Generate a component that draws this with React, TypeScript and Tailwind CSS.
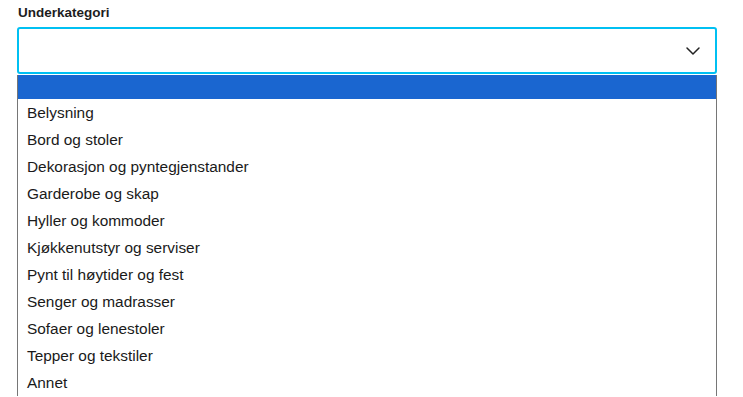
import { ChevronDown } from "lucide-react"

const options = [
	"",
	"Belysning",
	"Bord og stoler",
	"Dekorasjon og pyntegjenstander",
	"Garderobe og skap",
	"Hyller og kommoder",
	"Kjøkkenutstyr og serviser",
	"Pynt til høytider og fest",
	"Senger og madrasser",
	"Sofaer og lenestoler",
	"Tepper og tekstiler",
	"Annet",
]

export default function App() {
	return (
		<div className="w-[743px] h-[397px] overflow-hidden bg-white px-[17px] pt-[3px] font-['Liberation_Sans',sans-serif]">
			<label className="block pl-px text-[13.5px] leading-[20px] font-bold text-[#1d1d1d]">
				Underkategori
			</label>
			<div className="mt-[4px] w-[700px]">
				<div className="h-[47px] flex items-center justify-end pr-[10px] border-2 border-[#00c0f2] rounded-[3px]">
					<ChevronDown className="w-6 h-6 text-[#222]" strokeWidth={1.5} />
				</div>
				<ul className="mt-px border-x border-[#767676] text-[15.4px] text-[#1a1a1a]">
					{options.map((o, i) =>
						i === 0 ? (
							<li key={i} className="h-[24px] bg-[#1a66d0]" />
						) : (
							<li key={i} className="h-[27px] leading-[28px] pl-[9px]">
								{o}
							</li>
						)
					)}
				</ul>
			</div>
		</div>
	)
}
